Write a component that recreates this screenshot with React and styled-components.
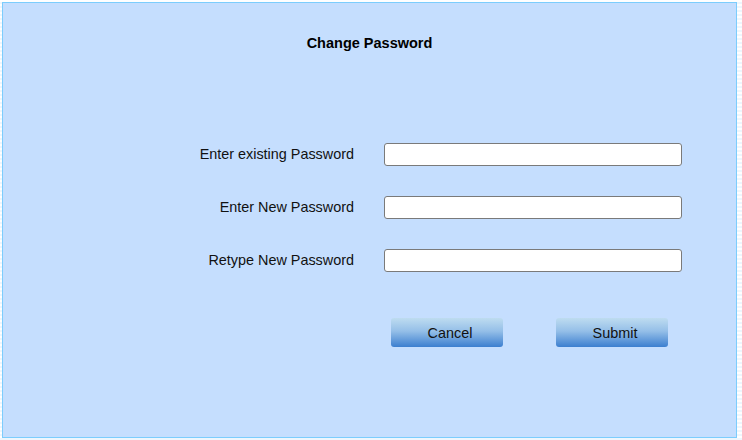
import React from 'react';
import styled, { createGlobalStyle } from 'styled-components';

const GlobalStyle = createGlobalStyle`
  html, body {
    margin: 0;
    padding: 0;
  }
  body {
    font-family: "Liberation Sans", Arial, sans-serif;
    background: repeating-linear-gradient(
      to bottom,
      #ffffff 0px,
      #ffffff 2px,
      #eef6fd 2px,
      #eef6fd 4px
    );
    min-height: 440px;
  }
`;

const Panel = styled.div`
  box-sizing: border-box;
  margin: 2px;
  width: 735px;
  height: 436px;
  background: #c5defe;
  border: 1px solid #7ccdfd;
`;

const Title = styled.h1`
  margin: 32px 0 0;
  text-align: center;
  font-size: 14.5px;
  line-height: 16px;
  font-weight: bold;
  color: #000;
`;

const Form = styled.form`
  display: flex;
  flex-direction: column;
  gap: 30px;
  margin-top: 92px;
`;

const Row = styled.div`
  display: flex;
  align-items: center;
  gap: 30px;
`;

const Label = styled.label`
  width: 351px;
  text-align: right;
  font-size: 14.4px;
  line-height: 16px;
  margin-top: -2px;
  color: #111;
`;

const Input = styled.input`
  box-sizing: border-box;
  width: 298px;
  height: 23px;
  margin: 0;
  padding: 2px 5px;
  border: 1px solid #7a7a7a;
  border-radius: 3px;
  background: #fff;
  font-family: inherit;
  font-size: 13px;
  outline: none;
`;

const Actions = styled.div`
  display: flex;
  gap: 53px;
  margin: 16px 0 0 388px;
`;

const Button = styled.button`
  box-sizing: border-box;
  width: 112px;
  height: 29px;
  padding: 0 0 0 6px;
  border: none;
  border-radius: 3px;
  background: linear-gradient(to bottom, #bedcf0 0%, #95bfe8 45%, #3c7fd0 100%);
  font-family: inherit;
  font-size: 14.4px;
  color: #111;
  cursor: pointer;
`;

const fields = [
  { id: 'existing', label: 'Enter existing Password' },
  { id: 'new', label: 'Enter New Password' },
  { id: 'retype', label: 'Retype New Password' },
];

const App = () => (
  <>
    <GlobalStyle />
    <Panel>
      <Title>Change Password</Title>
      <Form onSubmit={(e) => e.preventDefault()}>
        {fields.map((f) => (
          <Row key={f.id}>
            <Label htmlFor={f.id}>{f.label}</Label>
            <Input id={f.id} type="password" />
          </Row>
        ))}
        <Actions>
          <Button type="button">Cancel</Button>
          <Button type="submit">Submit</Button>
        </Actions>
      </Form>
    </Panel>
  </>
);

export default App;
